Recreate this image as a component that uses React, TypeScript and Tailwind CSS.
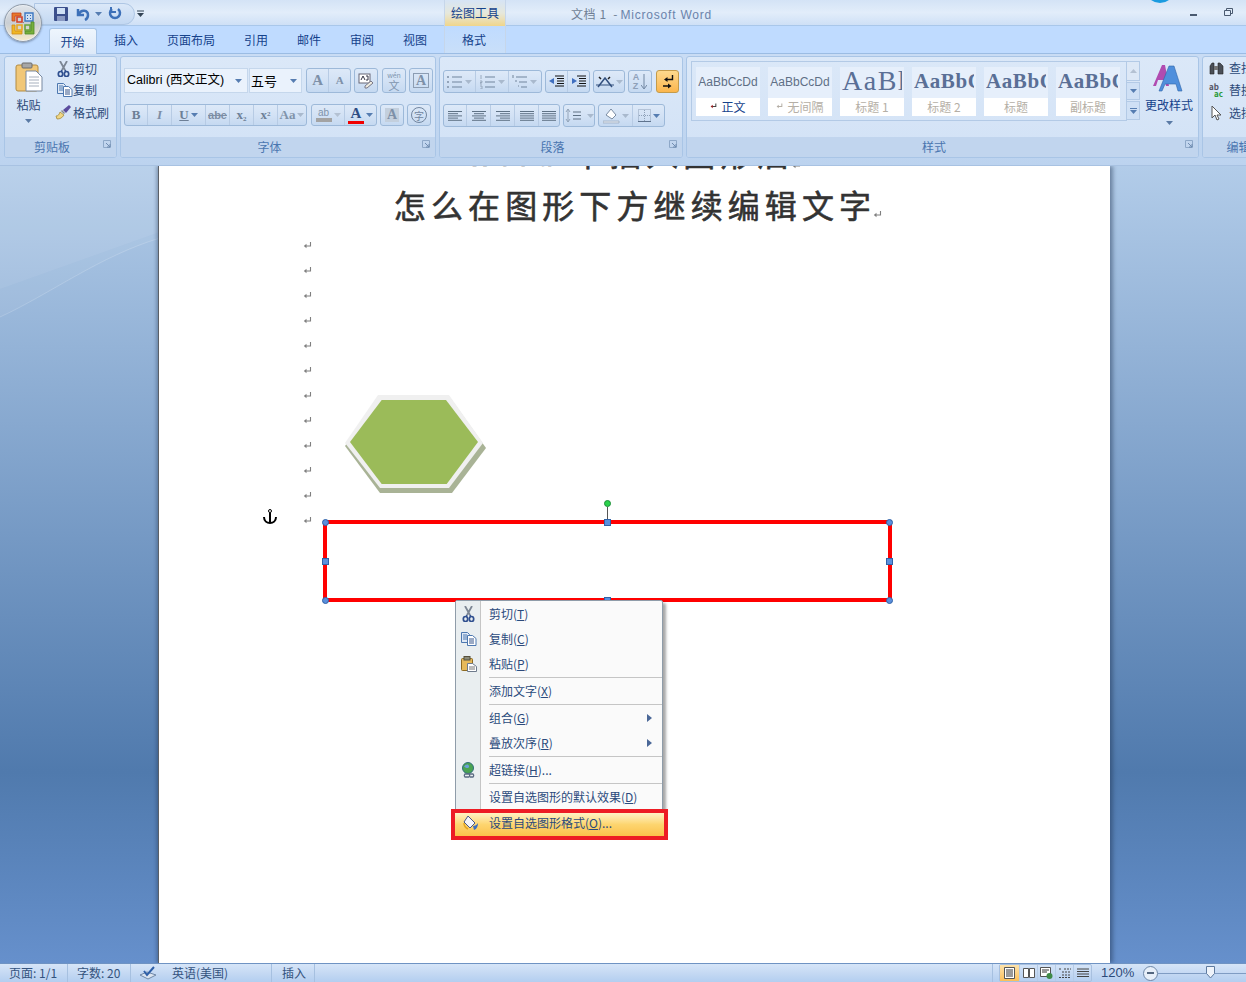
import React from "react";

const Caret = ({ c = "#567db1" }: { c?: string }) => (
  <svg width="7" height="4" viewBox="0 0 7 4" className="shrink-0"><path d="M0 0h7L3.500 4z" fill={c} /></svg>
);
const Seg = ({ c = "", children }: { c?: string; children?: React.ReactNode }) => (
  <div className={"flex items-center justify-center gap-[2px] h-full border-r border-[#b7cbe4] last:border-r-0 " + c}>{children}</div>
);
const BtnGroup = ({ c = "", children }: { c?: string; children: React.ReactNode }) => (
  <div className={"flex h-full shrink-0 rounded-[3px] border border-[#9db9d9] bg-gradient-to-b from-[#dde9f8] via-[#d3e2f5] to-[#c5d9f1] overflow-hidden " + c}>{children}</div>
);
const Group = ({ c, label, launcher = true, children }: { c: string; label: string; launcher?: boolean; children: React.ReactNode }) => (
  <div className={"relative shrink-0 flex flex-col rounded-[3px] border border-[#a9c5e6] bg-gradient-to-b from-[#dbe8f8] to-[#d2e2f6] overflow-hidden " + c}>
    <div className="flex-1 min-h-0">{children}</div>
    <div className="relative h-[20px] shrink-0 bg-[#c1d5ee] flex items-center justify-center pr-[17px] text-[12px] text-[#4a76b0]">
      {label}
      {launcher && (
        <svg width="9" height="9" viewBox="0 0 9 9" className="absolute right-[4px] top-[3px]"><path d="M.5.5h7v7h-7z" fill="none" stroke="#8ea8c8" /><path d="M3 3l4 4M7 4v3H4" stroke="#6f8bb0" fill="none" /></svg>
      )}
    </div>
  </div>
);
const Lines = ({ kind }: { kind: "l" | "c" | "r" | "j" }) => {
  const w = [14, 10, 14, 10, 14];
  return (
    <svg width="16" height="12" viewBox="0 0 16 12">
      {w.map((x, i) => {
        const ww = kind === "j" ? 14 : x;
        const s = kind === "r" ? 15 - ww : kind === "c" ? 8 - ww / 2 : 1;
        return <path key={i} d={`M${s} ${1.5 + i * 2.2}h${ww}`} stroke="#5e7184" />;
      })}
    </svg>
  );
};
const ScissorIcon = () => (
  <svg width="13" height="16" viewBox="0 0 13 16"><path d="M3 0l5 9M10 0L5 9" stroke="#7c8694" strokeWidth="1.800" /><path d="M5 9l-1 2M8 9l1 2" stroke="#2f4f8f" strokeWidth="1.500" /><ellipse cx="3.500" cy="13" rx="2.200" ry="2.500" fill="none" stroke="#2f4f8f" strokeWidth="1.700" /><ellipse cx="9.500" cy="13" rx="2.200" ry="2.500" fill="none" stroke="#2f4f8f" strokeWidth="1.700" /></svg>
);
const CopyIcon = () => (
  <svg width="16" height="14" viewBox="0 0 16 14"><path d="M.5.5h6l2 2v8h-8z" fill="#dfe9f6" stroke="#4d78b0" /><path d="M2 3h4M2 5h4M2 7h4" stroke="#4d78b0" /><path d="M6.500 3.500h5l3.500 3v7H6.500z" fill="#fff" stroke="#4d78b0" /><path d="M8 7h5M8 9h5M8 11h5" stroke="#34558a" /></svg>
);
const PasteSmall = () => (
  <svg width="16" height="16" viewBox="0 0 16 16"><rect x=".5" y="2.500" width="11" height="12" rx="1" fill="#e6b95a" stroke="#8d6a22" /><rect x="3" y=".5" width="6" height="3.500" fill="#8a8a78" stroke="#55503c" /><path d="M6.500 7.500h5l4 3v5h-9z" fill="#fff" stroke="#6d7a8c" /><path d="M8 11h6M8 13h6" stroke="#777" /></svg>
);
const BrushIcon = () => (
  <svg width="17" height="15" viewBox="0 0 17 15"><path d="M1 11c2 0 3-1 4-4l4 3c-2 3-4 4-7 4z" fill="#f0d684" stroke="#a58a3b" strokeWidth=".8" /><path d="M6 6l3 3 1-1-3-3z" fill="#888" /><path d="M8 5l6-5 2 2-5 6z" fill="#5b4c9e" /></svg>
);
const AIcon = ({ c = "#7d90a8", size = 14 }: { c?: string; size?: number }) => (
  <span className="font-bold leading-none" style={{ color: c, fontSize: size, fontFamily: "'Liberation Serif',serif" }}>A</span>
);
const Mark = () => (
  <svg width="9" height="8" viewBox="0 0 9 8"><path d="M7.500 0v4H2" fill="none" stroke="#7f7f7f" strokeWidth="1.100" /><path d="M3.500 1.800L.8 4l2.700 2.200z" fill="#7f7f7f" /></svg>
);
const StyleCard = ({ sample, label, big, head, mark, dark }: { sample: string; label: string; big?: boolean; head?: boolean; mark?: boolean; dark?: boolean }) => (
  <div className="w-[64px] h-[49px] shrink-0 flex flex-col overflow-hidden bg-white">
    <div className="h-[32px] bg-[#e6effb] flex items-center justify-center overflow-hidden">
      {head ? (
        <span className={"font-['Liberation_Serif',serif] text-[#5a6f96] whitespace-nowrap w-[60px] overflow-hidden " + (big ? "text-[28px] tracking-[1.500px] -mt-[3px] font-normal" : "text-[21px] tracking-[0.6px] font-bold")}>{sample}</span>
      ) : (
        <span className="font-['Liberation_Sans',sans-serif] text-[12px] text-[#5f6f86] whitespace-nowrap">{sample}</span>
      )}
    </div>
    <div className={"flex-1 flex items-center justify-center gap-[4px] text-[12px] " + (dark ? "text-[#15428b]" : "text-[#b5afa6]")}>
      {mark && <svg width="7" height="7" viewBox="0 0 9 8"><path d="M7.500 0v4H2" fill="none" stroke={dark ? "#444" : "#b5afa6"} strokeWidth="1.300" /><path d="M3.500 1.800L.8 4l2.700 2.200z" fill={dark ? "#a02020" : "#b5afa6"} /></svg>}
      {label}
    </div>
  </div>
);
const MenuItem = ({ icon, text, h = "h-[25px]", arrow }: { icon?: React.ReactNode; text: React.ReactNode; h?: string; arrow?: boolean }) => (
  <div className={"flex items-center " + h}>
    <div className="w-[25px] h-full flex items-center justify-center">{icon}</div>
    <div className="flex-1 pl-[8px] text-[12px] text-[#2b4a7c] whitespace-nowrap">{text}</div>
    {arrow && <svg width="5" height="8" viewBox="0 0 5 8" className="mr-[10px]"><path d="M0 0l5 4-5 4z" fill="#4a6797" /></svg>}
  </div>
);
const Sep = () => (
  <div className="flex h-[2px] items-center"><div className="w-[25px]" /><div className="ml-[8px] w-[174px] h-[1px] bg-[#c5c5c5]" /></div>
);
const U = ({ children }: { children: string }) => <span className="underline">{children}</span>;
const Handle = ({ c }: { c: string }) => <div className={"absolute w-[7px] h-[7px] border border-[#2f62a8] bg-[#5b8fdc] " + c} />;
const ListIcon = ({ kind }: { kind: number }) => (
  <svg width="16" height="14" viewBox="0 0 16 14">
    {kind === 0 && <path d="M0 2h2M0 7h2M0 12h2" stroke="#93a4b9" strokeWidth="2" />}
    {kind === 1 && <path d="M1 0v4M0 6h2v1.500H0V9h2M0 11h2v3H0" fill="none" stroke="#93a4b9" strokeWidth=".9" />}
    {kind === 2 && <path d="M1 0v3M3 6h2M6 11h1" stroke="#93a4b9" strokeWidth="1.500" />}
    {kind === 2 ? <path d="M4 2h11M7 7h8M9 12h6" stroke="#71859d" /> : <path d="M5 2h10M5 7h10M5 12h10" stroke="#71859d" />}
  </svg>
);

export default function App() {
  return (
    <div className="relative w-[1246px] h-[982px] overflow-hidden flex flex-col font-['Noto_Sans_CJK_SC','Liberation_Sans',sans-serif] bg-[#6088c2]">
      {/* title bar */}
      <div className="relative h-[26px] shrink-0 bg-gradient-to-b from-[#d4e3f6] via-[#e2edfa] to-[#cfe0f6] border-b border-[#a9c7ea]">
        <div className="absolute left-[34px] top-[3px] w-[101px] h-[22px] rounded-r-[11px] bg-gradient-to-b from-[#dbe8f8] to-[#c3d8f2] border border-[#aec6e4]" />
        <div className="absolute left-[54px] top-[7px] flex items-center">
          <svg width="14" height="14" viewBox="0 0 14 14"><rect width="14" height="14" rx="1" fill="#3b4f8c" /><rect x="3" y="1" width="8" height="6" fill="#cfe0f5" /><rect x="3" y="9" width="8" height="5" fill="#8b9bc4" /></svg>
          <svg width="14" height="14" viewBox="0 0 14 14" className="ml-[8px]"><path d="M2 2v6h6" fill="none" stroke="#3d70b8" strokeWidth="2.500" /><path d="M3 7c2-5 9-4 9 1 0 2-1 4-3 5" fill="none" stroke="#3d70b8" strokeWidth="2.500" /></svg>
          <div className="ml-[5px]"><Caret /></div>
          <svg width="14" height="14" viewBox="0 0 14 14" className="ml-[6px]"><path d="M10 2a5 5 0 1 1-6 0" fill="none" stroke="#3d70b8" strokeWidth="2.500" /><path d="M3 0v5h5" fill="none" stroke="#3d70b8" strokeWidth="2" /></svg>
          <svg width="7" height="7" viewBox="0 0 7 7" className="ml-[15px] -mt-[2px]"><path d="M0 1h7" stroke="#345" /><path d="M0 3h7L3.500 7z" fill="#345" /></svg>
        </div>
        <div className="absolute left-[444px] top-0 w-[62px] h-[26px] bg-gradient-to-b from-[#d6e4f5] via-[#e6e8dc] to-[#f0d58a] border-x border-[#c6d6ea] flex items-center justify-center text-[12px] text-[#15428b]">绘图工具</div>
        <div className="absolute left-[571px] top-[5px] text-[12px] tracking-[0.6px] text-[#6f7f95] whitespace-nowrap">文档 1 &nbsp;- <span className="-ml-[1px] text-[#6a83ab] font-['Liberation_Sans',sans-serif] tracking-[0.8px]">Microsoft Word</span></div>
        <div className="absolute left-[1145px] -top-[27px] w-[30px] h-[30px] rounded-full bg-[#1a9be0]" />
        <div className="absolute left-[1190px] top-[14px] w-[7px] h-[2px] bg-[#4a5a70]" />
        <svg width="9" height="8" viewBox="0 0 9 8" className="absolute left-[1224px] top-[8px]"><path d="M.5 2.500h6v5h-6zM2.500 2V.5h6v5H7" fill="none" stroke="#4a5a70" /></svg>
      </div>
      {/* tab row */}
      <div className="relative h-[28px] shrink-0 bg-[#bfdbff] border-b border-[#9bbce3] flex items-end text-[12px] text-[#15428b]">
        <div className="absolute left-[49px] top-[2px] w-[48px] h-[26px] rounded-t-[3px] border border-b-0 border-[#a5c3e6] bg-gradient-to-b from-[#eef5fd] to-[#dde9f8] flex items-center justify-center text-[#15428b] pr-[1px] z-10">开始</div>
        <div className="absolute left-[444px] top-0 w-[62px] h-[27px] border-x border-[#c6d6ea] bg-gradient-to-b from-[#bfdbff] to-[#c9dff9]" />
        <div className="w-full h-full flex items-center relative">
          <span className="ml-[114px]">插入</span>
          <span className="ml-[29px]">页面布局</span>
          <span className="ml-[29px]">引用</span>
          <span className="ml-[29px]">邮件</span>
          <span className="ml-[29px]">审阅</span>
          <span className="ml-[29px]">视图</span>
          <span className="ml-[35px]">格式</span>
        </div>
      </div>
      {/* office button */}
      <div className="absolute z-30 left-[4px] top-[4px] w-[38px] h-[38px] rounded-full border border-[#8f9aa8] bg-gradient-to-b from-[#eef2f6] via-[#d4d8dc] to-[#f3f4f2] shadow-[0_1px_2px_rgba(60,80,110,0.5)] flex items-center justify-center">
        <div className="w-[34px] h-[34px] rounded-full bg-gradient-to-b from-[#dfe4ea] via-[#c9ced4] to-[#f5e9c8] flex items-center justify-center">
          <svg width="24" height="24" viewBox="0 0 24 24">
            <path d="M1 2h9v3H4v5H1z" fill="#e8772a" stroke="#c1431f" strokeWidth=".8" />
            <path d="M6 6h5v5H6z" fill="none" stroke="#d4402a" strokeWidth="1.600" />
            <path d="M14 2h8v8h-8z" fill="#cfe0f2" stroke="#3e78c2" strokeWidth="1.400" />
            <path d="M16 4h1v1h-1zM19 4h1v1h-1zM16 7h1v1h-1zM19 7h1v1h-1z" fill="#2f66b5" />
            <path d="M1 14h3v6h7v3H1z" fill="#efb725" stroke="#d08a18" strokeWidth=".8" />
            <path d="M6 14h5v5H6z" fill="none" stroke="#e9a81e" strokeWidth="1.600" />
            <path d="M14 14h5v5h-5z" fill="none" stroke="#6aa537" strokeWidth="1.600" />
            <path d="M14 20h6v-9h3v12h-9z" fill="#77ae3b" stroke="#4d8a28" strokeWidth=".8" />
            <path d="M12 11h1v1h-1z" fill="#888" />
          </svg>
        </div>
      </div>
      {/* ribbon */}
      <div className="relative z-10 h-[112px] shrink-0 bg-gradient-to-b from-[#c9dcf4] to-[#bcd3ef] pt-[2px] border-b border-[#a8c2e2] flex gap-[3px] pl-[4px] text-[12px] text-[#2c4a79]">
        {/* clipboard */}
        <Group c="w-[113px] h-[102px]" label="剪贴板">
          <div className="flex h-full">
            <div className="w-[47px] flex flex-col items-center pt-[5px]">
              <svg width="28" height="30" viewBox="0 0 28 30"><rect x="1" y="3" width="22" height="26" rx="2" fill="#f1c777" stroke="#b28b43" /><rect x="7" y="1" width="10" height="5" rx="1" fill="#a7a7a7" stroke="#6c6c6c" /><path d="M11 9h10l6 6v14H11z" fill="#fff" stroke="#7889a1" /><path d="M14 15h10M14 18h10M14 21h10M14 24h10" stroke="#a7b0bd" /></svg>
              <div className="mt-[5px] leading-[16px] text-[#2c4a79]">粘贴</div>
              <div className="mt-[6px]"><Caret c="#5a7aa5" /></div>
            </div>
            <div className="flex flex-col pt-[1px]">
              <div className="flex items-center h-[21px] pl-[5px]"><ScissorIcon /><span className="ml-[3px]">剪切</span></div>
              <div className="flex items-center h-[22px] pl-[5px]"><CopyIcon /><span className="ml-[0px]">复制</span></div>
              <div className="flex items-center h-[23px] pl-[3px]"><BrushIcon /><span className="ml-[1px]">格式刷</span></div>
            </div>
          </div>
        </Group>
        {/* font */}
        <Group c="w-[316px] h-[102px]" label="字体">
          <div className="flex flex-col pt-[11px] pl-[3px]">
            <div className="flex h-[25px] gap-[1px]">
              <div className="w-[124px] h-full bg-[#eaf2fc] border border-[#c5d7ec] flex items-center pl-[2px] text-black font-['Liberation_Sans','Noto_Sans_CJK_SC',sans-serif] text-[12.500px] whitespace-nowrap">Calibri (西文正文)<span className="ml-auto mr-[5px]"><Caret /></span></div>
              <div className="w-[53px] h-full bg-[#eaf2fc] border border-[#c5d7ec] flex items-center pl-[1px] text-black text-[13px]">五号<span className="ml-auto mr-[4px]"><Caret /></span></div>
              <BtnGroup c="ml-[3px] w-[45px]"><Seg c="w-[23px]"><AIcon size={15} /></Seg><Seg c="w-[21px]"><AIcon size={11} /></Seg></BtnGroup>
              <BtnGroup c="ml-[2px] w-[24px]"><Seg c="w-full"><svg width="16" height="16" viewBox="0 0 16 16"><rect x="1" y="1" width="11" height="9" fill="#fff" stroke="#667" /><path d="M3 7l2-4 2 4M8 3h2v4H8" stroke="#334" fill="none" /><path d="M7 13l6-5 2 2-6 5H7z" fill="#efece0" stroke="#778" /></svg></Seg></BtnGroup>
              <BtnGroup c="ml-[3px] w-[24px]"><Seg c="w-full"><span className="flex flex-col items-center text-[#8095ae]"><span className="text-[7px] leading-[8px]">wén</span><span className="text-[11px] leading-[12px]">文</span></span></Seg></BtnGroup>
              <BtnGroup c="ml-[2px] w-[24px]"><Seg c="w-full"><span className="border border-[#8c9db3] px-[2px] h-[15px] flex items-center"><AIcon size={14} /></span></Seg></BtnGroup>
            </div>
            <div className="flex h-[22px] mt-[11px]">
              <BtnGroup c="w-[183px]">
                <Seg c="w-[23px]"><span className="font-['Liberation_Serif',serif] font-bold text-[13px] text-[#6d7f96]">B</span></Seg>
                <Seg c="w-[24px]"><span className="font-['Liberation_Serif',serif] italic font-bold text-[13px] text-[#7d8ea5]">I</span></Seg>
                <Seg c="w-[34px]"><span className="font-['Liberation_Serif',serif] underline font-bold text-[13px] text-[#6d7f96]">U</span><Caret /></Seg>
                <Seg c="w-[24px]"><span className="font-['Liberation_Sans',sans-serif] line-through text-[11px] font-bold text-[#7d8ea5]">abe</span></Seg>
                <Seg c="w-[24px]"><span className="font-['Liberation_Serif',serif] font-bold text-[13px] text-[#6d7f96]">x<sub className="text-[7px]">2</sub></span></Seg>
                <Seg c="w-[24px]"><span className="font-['Liberation_Serif',serif] font-bold text-[13px] text-[#6d7f96]">x<sup className="text-[7px]">2</sup></span></Seg>
                <Seg c="flex-1"><span className="font-['Liberation_Serif',serif] font-bold text-[13px] text-[#8093aa]">Aa</span><Caret c="#a9b9cd" /></Seg>
              </BtnGroup>
              <BtnGroup c="ml-[4px] w-[66px]">
                <Seg c="w-[33px]"><span className="flex flex-col items-center leading-[9px] text-[10px] text-[#8093aa] font-['Liberation_Sans',sans-serif]">ab<span className="w-[16px] h-[4px] bg-[#a3a3a3] mt-[1px]" /></span><Caret c="#b4c1d2" /></Seg>
                <Seg c="flex-1"><span className="flex flex-col items-center leading-[12px]"><AIcon c="#2d4d85" size={15} /><span className="w-[16px] h-[3px] bg-[#f00000]" /></span><Caret /></Seg>
              </BtnGroup>
              <BtnGroup c="ml-[3px] w-[24px]"><Seg c="w-full"><span className="bg-[#c3cfdd] w-[14px] h-[14px] flex items-center justify-center"><AIcon size={14} /></span></Seg></BtnGroup>
              <BtnGroup c="ml-[3px] w-[24px]"><Seg c="w-full"><span className="w-[16px] h-[16px] rounded-full border border-[#71859f] flex items-center justify-center text-[10px] text-[#71859f]">字</span></Seg></BtnGroup>
            </div>
          </div>
        </Group>
        {/* paragraph */}
        <Group c="w-[244px] h-[102px]" label="段落">
          <div className="flex flex-col pt-[13px] pl-[3px]">
            <div className="flex h-[23px]">
              <BtnGroup c="w-[99px]">
                {[0, 1, 2].map(i => <Seg key={i} c="w-[33px]"><ListIcon kind={i} /><Caret c="#a9b9cd" /></Seg>)}
              </BtnGroup>
              <BtnGroup c="ml-[3px] w-[45px]">
                <Seg c="w-[22px]"><svg width="16" height="13" viewBox="0 0 16 13"><path d="M6 1h9M8 3.500h7M8 6h7M8 8.500h7M6 11h9" stroke="#111" /><path d="M0 6l5-3v6z" fill="#3f6fc0" /></svg></Seg>
                <Seg c="flex-1"><svg width="16" height="13" viewBox="0 0 16 13"><path d="M6 1h9M8 3.500h7M8 6h7M8 8.500h7M6 11h9" stroke="#111" /><path d="M6 6L1 3v6z" fill="#3f6fc0" /></svg></Seg>
              </BtnGroup>
              <BtnGroup c="ml-[3px] w-[32px]"><Seg c="w-full"><svg width="18" height="13" viewBox="0 0 18 13"><path d="M2 12L9 3l7 9" fill="none" stroke="#33507e" strokeWidth="1.500" /><path d="M0 10h18" stroke="#33507e" /><path d="M3 2l2 2M14 2l-2 2" stroke="#222" strokeWidth="1.500" /></svg><Caret c="#a9b9cd" /></Seg></BtnGroup>
              <BtnGroup c="ml-[3px] w-[24px]"><Seg c="w-full"><span className="flex flex-col leading-[9px] text-[9px] text-[#8ea0b8] font-bold font-['Liberation_Sans',sans-serif]"><span>A</span><span>Z</span></span><svg width="6" height="16" viewBox="0 0 6 16"><path d="M3 0v14M0 11l3 4 3-4" fill="none" stroke="#7186a1" /></svg></Seg></BtnGroup>
              <div className="ml-[4px] w-[23px] h-full rounded-[3px] border border-[#c49b4a] bg-gradient-to-b from-[#fdd98d] to-[#fbb64c] flex items-center justify-center">
                <svg width="12" height="16" viewBox="0 0 12 16"><path d="M10.500 1v4.500H5M1 12h5" fill="none" stroke="#111" strokeWidth="1.400" /><path d="M5.500 3L2 5.500 5.500 8zM6 9.500L9.500 12 6 14.500z" fill="#111" /></svg>
              </div>
            </div>
            <div className="flex h-[23px] mt-[11px]">
              <BtnGroup c="w-[117px]">
                <Seg c="w-[23px]"><Lines kind="l" /></Seg><Seg c="w-[24px]"><Lines kind="c" /></Seg><Seg c="w-[24px]"><Lines kind="r" /></Seg><Seg c="w-[24px]"><Lines kind="j" /></Seg><Seg c="flex-1"><Lines kind="j" /></Seg>
              </BtnGroup>
              <BtnGroup c="ml-[3px] w-[32px]"><Seg c="w-full"><svg width="20" height="15" viewBox="0 0 20 15"><path d="M3 1v13M1 4l2-3 2 3M1 11l2 3 2-3" fill="none" stroke="#93a4b9" /><path d="M8 4h8M8 7.500h8M8 11h8" stroke="#5e7184" /></svg><Caret c="#a9b9cd" /></Seg></BtnGroup>
              <BtnGroup c="ml-[3px] w-[67px]">
                <Seg c="w-[34px]"><svg width="17" height="17" viewBox="0 0 17 17"><path d="M3 8l5-6 5 6-4 4z" fill="#fff" stroke="#7a8ca3" /><path d="M0 14h16v2H0z" fill="#dfe6ef" stroke="#8e9db1" strokeWidth=".6" /></svg><Caret c="#a9b9cd" /></Seg>
                <Seg c="flex-1"><svg width="13" height="13" viewBox="0 0 13 13"><path d="M.5.5h12v12H.5zM6.500 1v11M1 6.500h11" fill="none" stroke="#8ea1b8" strokeDasharray="1 1" /><path d="M0 12.500h13" stroke="#5f738d" /></svg><Caret /></Seg>
              </BtnGroup>
            </div>
          </div>
        </Group>
        {/* styles */}
        <Group c="w-[513px] h-[102px]" label="样式">
          <div className="flex h-full">
            <div className="mt-[4px] ml-[4px] h-[60px] w-[436px] shrink-0 border border-[#b3cae6] flex items-center gap-[8px] pl-[4px]">
              <StyleCard sample="AaBbCcDd" label="正文" mark dark />
              <StyleCard sample="AaBbCcDd" label="无间隔" mark />
              <StyleCard sample="AaBl" label="标题 1" head big />
              <StyleCard sample="AaBbC" label="标题 2" head />
              <StyleCard sample="AaBbC" label="标题" head />
              <StyleCard sample="AaBbC" label="副标题" head />
            </div>
            <div className="mt-[4px] w-[14px] shrink-0 h-[60px] flex flex-col gap-[1px] -ml-[1px]">
              <div className="h-[20px] bg-[#dde8f6] border border-[#b3cae6] flex items-center justify-center"><svg width="7" height="4" viewBox="0 0 7 4"><path d="M0 4h7L3.500 0z" fill="#b4c1d2" /></svg></div>
              <div className="h-[18px] bg-[#cfe0f5] border border-[#b3cae6] flex items-center justify-center"><Caret /></div>
              <div className="h-[19px] bg-[#cfe0f5] border border-[#b3cae6] flex flex-col items-center justify-center gap-[1px]"><div className="w-[7px] h-[1px] bg-[#567db1]" /><Caret /></div>
            </div>
            <div className="flex-1 flex flex-col items-center pt-[6px]">
              <svg width="32" height="30" viewBox="0 0 32 30"><path d="M0 23L9 2h3l4 21h-3l-1-6H5l-2 6z" fill="#b04bb0" /><path d="M6 28L16 3h5l8 25h-4l-2-7H12l-3 7z" fill="#4f8fdc" stroke="#2f64a8" strokeWidth=".6" /></svg>
              <div className="mt-[3px] text-[12px] text-[#15428b] whitespace-nowrap">更改样式</div>
              <div className="mt-[7px]"><Caret c="#5a7aa5" /></div>
            </div>
          </div>
        </Group>
        {/* edit */}
        <Group c="w-[90px] h-[102px]" label="编辑" launcher={false}>
          <div className="flex flex-col pl-[6px] whitespace-nowrap">
            <div className="flex items-center h-[22px]"><svg width="15" height="14" viewBox="0 0 15 14"><path d="M1 13V5l2-3h2v11zM9 13V2h2l3 3v8z" fill="#4a4f57" stroke="#222" strokeWidth=".6" /><path d="M5 5h4v4H5z" fill="#777" /></svg><span className="ml-[5px]">查找</span></div>
            <div className="flex items-center h-[22px]"><span className="w-[15px] flex flex-col text-[8px] leading-[7px] font-bold text-[#556]"><span>ab</span><span className="text-[#2a9a3a] pl-[5px]">ac</span></span><span className="ml-[5px]">替换</span></div>
            <div className="flex items-center h-[24px]"><svg width="15" height="15" viewBox="0 0 15 15"><path d="M3 0v12l3-3 2 5 2-1-2-4h4z" fill="#fff" stroke="#555" /></svg><span className="ml-[5px]">选择</span></div>
          </div>
        </Group>
      </div>
      {/* workspace */}
      <div className="relative flex-1 min-h-0 flex justify-start pl-[158px] bg-gradient-to-b from-[#b2cce9] via-[#507aad] via-[76%] to-[#6690cc]">
        <svg className="absolute left-0 top-0" width="160" height="160" viewBox="0 0 160 160">
          <path d="M0 0h160v66L0 123z" fill="#fff" fillOpacity=".1" />
          <path d="M0 123L160 66v6C100 90 50 128 0 151z" fill="#fff" fillOpacity=".05" />
          <path d="M0 151C50 128 100 90 160 72" fill="none" stroke="#fff" strokeOpacity=".18" />
        </svg>
        <div className="relative w-[952px] h-full shrink-0 bg-white overflow-hidden border-l border-[#5b6068] shadow-[3px_0_4px_rgba(30,50,80,0.45),-2px_0_3px_rgba(30,50,80,0.3)]">
          <div className="flex justify-center items-end text-[#333] text-[32px] leading-[42px] tracking-[5.100px] [-webkit-text-stroke:0.6px_#333] -mt-[32px] whitespace-nowrap font-['Liberation_Sans','Noto_Sans_CJK_SC',sans-serif]"><span>word 中插入图形后</span><span className="-ml-[3px] mb-[6px]"><Mark /></span></div>
          <div className="text-[#333] text-[32px] leading-[42px] tracking-[5.100px] [-webkit-text-stroke:0.6px_#333] pt-[7px] flex justify-center items-end whitespace-nowrap pl-[7px]"><span>怎么在图形下方继续编辑文字</span><span className="-ml-[3px] mb-[6px]"><Mark /></span></div>
          <div className="absolute left-[144px] top-[67px] flex flex-col">
            {Array.from({ length: 12 }).map((_, i) => <div key={i} className="h-[25px] flex items-center"><Mark /></div>)}
          </div>
          {/* anchor */}
          <svg className="absolute left-[104px] top-[343px]" width="14" height="16" viewBox="0 0 14 16"><circle cx="7" cy="2" r="1.500" fill="none" stroke="#000" /><path d="M7 3.500V14M1 8c0 4 3 6 6 6s6-2 6-6" fill="none" stroke="#000" strokeWidth="2" /></svg>
          {/* hexagon */}
          <svg className="absolute left-[180px] top-[224px]" width="150" height="105" viewBox="0 0 150 105">
            <path d="M41 9h71l35 49-34 45H41L6 56z" fill="#a9b396" />
            <path d="M39 5h71l34 48-34 45H41L6 53z" fill="#f0f0f0" />
            <path d="M42.700 10h64.300l32 42-31.300 42H42.700L11 52z" fill="#9bbb59" />
          </svg>
          {/* selected rectangle */}
          <div className="absolute left-[164px] top-[354px] w-[569px] h-[82px] border-[4px] border-[#ff0000]">
            <div className="absolute left-[280px] -top-[17px] w-[1px] h-[13px] bg-[#555]" />
            <div className="absolute left-[277px] -top-[24px] w-[7px] h-[7px] rounded-full bg-[#2bd24b] border border-[#1e8f3a]" />
            <Handle c="-left-[5px] -top-[5px] rounded-full" />
            <Handle c="left-[277px] -top-[5px]" />
            <Handle c="-right-[5px] -top-[5px] rounded-full" />
            <Handle c="-left-[5px] top-[34px]" />
            <Handle c="-right-[5px] top-[34px]" />
            <Handle c="-left-[5px] -bottom-[6px] rounded-full" />
            <Handle c="-right-[5px] -bottom-[6px] rounded-full" />
            <Handle c="left-[277px] -bottom-[6px]" />
          </div>
        </div>
        {/* context menu */}
        <div className="absolute left-[455px] top-[434px] w-[208px] h-[234px] border border-[#8f9ca9] rounded-[2px] bg-[#fafafa] shadow-[3px_3px_3px_rgba(0,0,0,0.35)] z-20 flex flex-col">
          <div className="absolute left-0 top-0 bottom-0 w-[25px] bg-[#e9eef0] border-r border-[#c5c5c5]" />
          <div className="relative flex flex-col">
            <MenuItem icon={<ScissorIcon />} text={<>剪切(<U>T</U>)</>} />
            <MenuItem icon={<CopyIcon />} text={<>复制(<U>C</U>)</>} />
            <MenuItem icon={<PasteSmall />} text={<>粘贴(<U>P</U>)</>} />
            <Sep />
            <MenuItem text={<>添加文字(<U>X</U>)</>} />
            <Sep />
            <MenuItem arrow text={<>组合(<U>G</U>)</>} />
            <MenuItem arrow text={<>叠放次序(<U>R</U>)</>} />
            <Sep />
            <MenuItem icon={<svg width="16" height="16" viewBox="0 0 16 16"><circle cx="7" cy="6" r="5.500" fill="#4aa352" stroke="#2e6f7a" /><path d="M3 5c2-3 4-3 5-1s-3 3-4 1z" fill="#6aa0d8" /><path d="M4 12h4a2 2 0 0 1 0 3H4a2 2 0 0 1 0-3zM8 12h4a2 2 0 0 1 0 3H9" fill="none" stroke="#5a6b82" strokeWidth="1.300" /></svg>} text={<>超链接(<U>H</U>)...</>} />
            <Sep />
            <MenuItem text={<>设置自选图形的默认效果(<U>D</U>)</>} />
          </div>
        </div>
        <div className="absolute left-[451px] top-[643px] w-[217px] h-[31px] border-[4px] border-[#ed1c24] z-30 bg-gradient-to-b from-[#fff3c4] via-[#fdd56f] to-[#fbc14a] flex items-center pb-[3px]">
          <div className="w-[30px] flex items-center justify-center pl-[2px]"><svg width="16" height="16" viewBox="0 0 16 16"><path d="M5 1l7 7-5 5-6-6z" fill="#f4f6fb" stroke="#44578a" /><path d="M10 11c2 0 4-1 5-3 0 3-1 6-4 7z" fill="#3b6fc2" /><path d="M1 8c0 3 2 5 4 6" fill="none" stroke="#e2a520" strokeWidth="1.500" /></svg></div>
          <div className="pl-[4px] text-[12px] text-[#2b4a7c] whitespace-nowrap">设置自选图形格式(<U>O</U>)...</div>
        </div>
      </div>
      {/* status bar */}
      <div className="relative h-[19px] shrink-0 flex items-center bg-gradient-to-b from-[#d6e5f8] via-[#c5d9f3] to-[#b3cef0] border-t border-[#6f93c3] text-[12px] text-[#34537e] whitespace-nowrap">
        <div className="w-[68px] h-full pl-[9px] flex items-center border-r border-[#a6c0e0]">页面: 1/1</div>
        <div className="w-[63px] h-full pl-[9px] flex items-center border-r border-[#a6c0e0]">字数: 20</div>
        <div className="w-[141px] h-full pl-[8px] flex items-center border-r border-[#a6c0e0]">
          <svg width="18" height="15" viewBox="0 0 18 15"><path d="M1 9l7-3 9 3-8 4z" fill="#dbe4f0" stroke="#6f88a8" /><path d="M5 5l3 4 7-8" fill="none" stroke="#2e5fa8" strokeWidth="2" /></svg>
          <span className="ml-[15px]">英语(美国)</span>
        </div>
        <div className="w-[43px] h-full pl-[10px] flex items-center border-r border-[#a6c0e0]">插入</div>
        <div className="ml-auto flex items-center h-full">
          <div className="w-[7px] h-full border-l border-[#a6c0e0]" />
          <div className="flex h-[18px] border border-[#a8c0df] rounded-[2px] mr-[9px]">
            <div className="w-[19px] h-full flex items-center justify-center bg-gradient-to-b from-[#fde3ab] to-[#fbbf58]"><svg width="11" height="12" viewBox="0 0 11 12"><path d="M.5.5h10v11H.5z" fill="#fff" stroke="#555" /><path d="M2 3h7M2 5h7M2 7h7M2 9h7" stroke="#333" /></svg></div>
            <div className="w-[18px] flex items-center justify-center border-l border-[#b5cbe6]"><svg width="12" height="12" viewBox="0 0 12 12"><path d="M.5 1.500h5v9h-5zM6.500 1.500h5v9h-5z" fill="#fff" stroke="#555" /></svg></div>
            <div className="w-[18px] flex items-center justify-center border-l border-[#b5cbe6]"><svg width="13" height="12" viewBox="0 0 13 12"><path d="M.5.5h10v9H.5z" fill="#fff" stroke="#555" /><path d="M2 3h7M2 5h5" stroke="#333" /><circle cx="9.500" cy="9" r="3" fill="#3f8a48" /></svg></div>
            <div className="w-[18px] flex items-center justify-center border-l border-[#b5cbe6]"><svg width="12" height="10" viewBox="0 0 12 10"><path d="M0 1h3M5 1h7M3 4h2M6 4h6M3 7h2M6 7h6M0 9.500h12" stroke="#444" strokeDasharray="2 1" /></svg></div>
            <div className="w-[18px] flex items-center justify-center border-l border-[#b5cbe6]"><svg width="12" height="10" viewBox="0 0 12 10"><path d="M0 1h12M0 3.500h12M0 6h12M0 8.500h12" stroke="#444" /></svg></div>
          </div>
          <span className="text-[#2c4a79] w-[33px] font-['Liberation_Sans',sans-serif] text-[13px]">120%</span>
          <div className="ml-[9px] w-[15px] h-[15px] rounded-full border border-[#6d87a8] bg-[#e7eff9] flex items-center justify-center"><div className="w-[7px] h-[2px] bg-[#53667f]" /></div>
          <div className="relative w-[88px] h-full flex items-center">
            <div className="w-full h-[1px] bg-[#7f9cc3]" />
            <svg width="9" height="13" viewBox="0 0 9 13" className="absolute left-[48px] top-[2px]"><path d="M.5.5h8v7L4.500 12 .5 7.500z" fill="#eef3fa" stroke="#5e7a9f" /></svg>
          </div>
        </div>
      </div>
    </div>
  );
}
